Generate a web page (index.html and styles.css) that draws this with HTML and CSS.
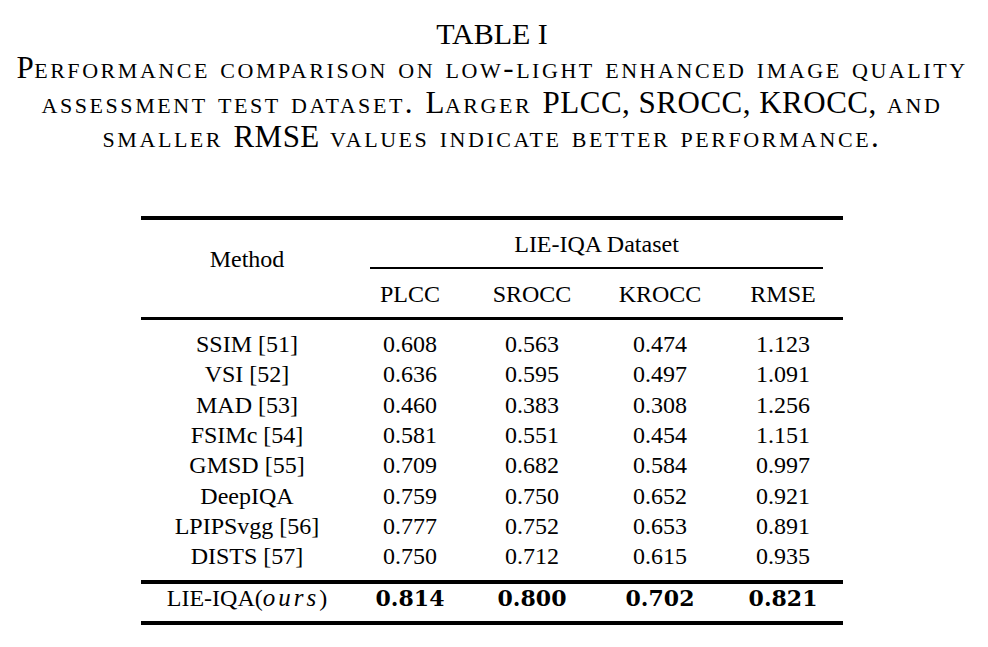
FILE: index.html
```html
<!DOCTYPE html>
<html lang="en">
<head>
<meta charset="utf-8">
<title>Table I</title>
<link rel="stylesheet" href="styles.css">
</head>
<body>
<div class="page">
  <div class="caption">
    <div class="title">TABLE I</div>
    <div class="desc"><span class="cap">P</span>erformance comparison on low-light enhanced image quality<br>assessment test dataset. <span class="cap">L</span>arger <span class="cap">PLCC, SROCC, KROCC,</span> and<br>smaller <span class="cap">RMSE</span> values indicate better performance.</div>
  </div>
  <table class="results">
    <colgroup>
      <col class="c-method">
      <col class="c-plcc">
      <col class="c-srocc">
      <col class="c-krocc">
      <col class="c-rmse">
    </colgroup>
    <thead>
      <tr class="head1">
        <th class="method-head" rowspan="2">Method</th>
        <th class="dataset-head" colspan="4"><div class="dataset">LIE-IQA Dataset</div></th>
      </tr>
      <tr class="head2">
        <th>PLCC</th>
        <th>SROCC</th>
        <th>KROCC</th>
        <th>RMSE</th>
      </tr>
    </thead>
    <tbody class="data">
      <tr><td>SSIM [51]</td><td>0.608</td><td>0.563</td><td>0.474</td><td>1.123</td></tr>
      <tr><td>VSI [52]</td><td>0.636</td><td>0.595</td><td>0.497</td><td>1.091</td></tr>
      <tr><td>MAD [53]</td><td>0.460</td><td>0.383</td><td>0.308</td><td>1.256</td></tr>
      <tr><td>FSIMc [54]</td><td>0.581</td><td>0.551</td><td>0.454</td><td>1.151</td></tr>
      <tr><td>GMSD [55]</td><td>0.709</td><td>0.682</td><td>0.584</td><td>0.997</td></tr>
      <tr><td>DeepIQA</td><td>0.759</td><td>0.750</td><td>0.652</td><td>0.921</td></tr>
      <tr><td>LPIPSvgg [56]</td><td>0.777</td><td>0.752</td><td>0.653</td><td>0.891</td></tr>
      <tr><td>DISTS [57]</td><td>0.750</td><td>0.712</td><td>0.615</td><td>0.935</td></tr>
    </tbody>
    <tbody class="ours">
      <tr>
        <td>LIE-IQA(<span class="math">ours</span>)</td>
        <td class="best">0.814</td>
        <td class="best">0.800</td>
        <td class="best">0.702</td>
        <td class="best">0.821</td>
      </tr>
    </tbody>
  </table>
</div>
</body>
</html>
```

FILE: styles.css
```css
html, body {
  margin: 0;
  padding: 0;
  background: #ffffff;
}

body {
  font-family: "Liberation Serif", "Times New Roman", serif;
  color: #000000;
}

.page {
  width: 984px;
  padding-top: 17px;
}

.caption {
  text-align: center;
  line-height: 34.3px;
}

.title {
  font-size: 30px;
}

.desc {
  font-size: 31px;
  font-variant: small-caps;
  letter-spacing: 2.55px;
}

.desc .cap {
  letter-spacing: 0.5px;
}

.results {
  margin: 62px 0 0 141px;
  width: 702px;
  table-layout: fixed;
  border-collapse: separate;
  border-spacing: 0;
  border-top: 4px solid #000;
  border-bottom: 4px solid #000;
  font-size: 24px;
}

.c-method { width: 212px; }
.c-plcc { width: 114px; }
.c-srocc { width: 130px; }
.c-krocc { width: 126px; }
.c-rmse { width: 120px; }

.results th,
.results td {
  padding: 0;
  text-align: center;
  font-weight: normal;
  white-space: nowrap;
}

.results th {
  line-height: 24px;
}

.results .method-head {
  vertical-align: top;
  padding-top: 27px;
  border-bottom: 3px solid #000;
}

.results .dataset-head {
  vertical-align: top;
  padding-top: 12px;
}

.dataset {
  margin: 0 20px 0 17px;
  padding-bottom: 11px;
  border-bottom: 2px solid #000;
}

.results .head2 th {
  padding-top: 13px;
  padding-bottom: 11px;
  border-bottom: 3px solid #000;
}

.results .data td {
  line-height: 30.3px;
}

.results .data tr:first-child td {
  padding-top: 9px;
}

.results .data tr:last-child td {
  padding-bottom: 8px;
}

.results .ours td {
  border-top: 4px solid #000;
  line-height: 24px;
  padding-top: 2px;
  padding-bottom: 11px;
  vertical-align: baseline;
}

.math {
  font-style: italic;
  letter-spacing: 3px;
  font-size: 25px;
}

.results td.best {
  font-family: "DejaVu Serif", serif;
  font-weight: bold;
  font-size: 22px;
}
```
